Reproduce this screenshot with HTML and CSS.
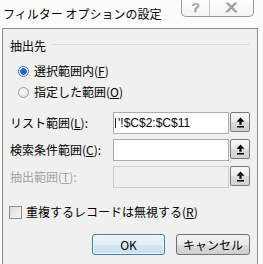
FILE: index.html
```html
<!DOCTYPE html>
<html lang="ja">
<head>
    <meta charset="UTF-8">
    <title>フィルター オプションの設定</title>
    <link rel="stylesheet" href="styles.css">
</head>
<body>
    <div class="ventana">
        <div class="barra-titulo">
            <span class="titulo">フィルター オプションの設定</span>
            <div class="botones-titulo">
                <span class="btn-ayuda">?</span>
                <span class="btn-cerrar">X</span>
            </div>
        </div>

        <div class="panel">
            <div class="grupo-cabecera">
                <span>抽出先</span>
                <span class="grupo-linea"></span>
            </div>

            <label class="opcion opcion-primera">
                <span class="radio radio-activo"></span>
                <span>選択範囲内(<u>F</u>)</span>
            </label>
            <label class="opcion">
                <span class="radio"></span>
                <span>指定した範囲(<u>O</u>)</span>
            </label>

            <div class="campo campo-primero">
                <span class="campo-etiqueta">リスト範囲(<u>L</u>):</span>
                <div class="campo-entrada"><span class="recorte"></span><span>'!$C$2:$C$11</span></div>
                <span class="btn-rango">
                    <svg width="9" height="11" viewBox="0 0 9 11"><path d="M4.5 0.5 L8.5 4.8 L5.6 4.8 L5.6 7.8 L3.4 7.8 L3.4 4.8 L0.5 4.8 Z" fill="#000"/><rect x="1" y="9" width="7" height="1.5" fill="#000"/></svg>
                </span>
            </div>
            <div class="campo">
                <span class="campo-etiqueta">検索条件範囲(<u>C</u>):</span>
                <div class="campo-entrada"></div>
                <span class="btn-rango">
                    <svg width="9" height="11" viewBox="0 0 9 11"><path d="M4.5 0.5 L8.5 4.8 L5.6 4.8 L5.6 7.8 L3.4 7.8 L3.4 4.8 L0.5 4.8 Z" fill="#000"/><rect x="1" y="9" width="7" height="1.5" fill="#000"/></svg>
                </span>
            </div>
            <div class="campo">
                <span class="campo-etiqueta desactivado">抽出範囲(<u>T</u>):</span>
                <div class="campo-entrada entrada-desactivada"></div>
                <span class="btn-rango">
                    <svg width="9" height="11" viewBox="0 0 9 11"><path d="M4.5 0.5 L8.5 4.8 L5.6 4.8 L5.6 7.8 L3.4 7.8 L3.4 4.8 L0.5 4.8 Z" fill="#000"/><rect x="1" y="9" width="7" height="1.5" fill="#000"/></svg>
                </span>
            </div>

            <label class="casilla-fila">
                <span class="casilla"></span>
                <span>重複するレコードは無視する(<u>R</u>)</span>
            </label>

            <div class="acciones">
                <button class="boton boton-ok">OK</button>
                <button class="boton">キャンセル</button>
            </div>
        </div>
    </div>
</body>
</html>
```

FILE: styles.css
```css
/* Diálogo de opciones de filtro */
body {
    margin: 0;
    background-color: #fcfcfc;
    font-family: "Noto Sans CJK JP", "Noto Sans", sans-serif;
    font-size: 12px;
    color: #000;
    overflow: hidden;
}

.ventana {
    width: 263px;
    height: 264px;
    display: flex;
    flex-direction: column;
}

.barra-titulo {
    height: 28px;
    display: flex;
    align-items: flex-start;
    flex-shrink: 0;
}

.titulo {
    padding-left: 3px;
    margin-top: 6px;
    line-height: 16px;
}

.botones-titulo {
    margin-left: auto;
    margin-right: 9px;
    margin-top: -1px;
    display: flex;
    height: 17px;
    border: 1px solid #9a9a9a;
    border-top: none;
    border-radius: 0 0 5px 5px;
    background: linear-gradient(#ffffff, #f3f3f3);
}

.botones-titulo span {
    display: flex;
    align-items: center;
    justify-content: center;
    font-family: "Liberation Sans", sans-serif;
    font-size: 13px;
    color: transparent;
    -webkit-text-stroke: 0.7px #8a8a8a;
}

.btn-ayuda {
    width: 27px;
    border-right: 1px solid #c4c4c4;
}

.btn-cerrar {
    width: 43px;
    transform: scaleX(1.3);
}

.panel {
    flex: 1;
    margin: 0 5px 0 2px;
    border: 1px solid #8c8c8c;
    border-bottom: none;
    background-color: #f0f0f0;
    padding-top: 9px;
}

.grupo-cabecera {
    display: flex;
    padding: 0 7px;
    line-height: 16px;
}

.grupo-linea {
    flex: 1;
    height: 1px;
    margin: 6px 0 0 6px;
    background-color: #d8dde2;
}

.opcion {
    display: flex;
    align-items: center;
    padding-left: 15px;
    line-height: 16px;
    margin-top: 5px;
}

.opcion-primera {
    margin-top: 9px;
}

.radio {
    width: 9px;
    height: 9px;
    border: 1px solid #9c9c9c;
    border-radius: 50%;
    background: radial-gradient(circle at 40% 35%, #ffffff, #dcdcdc);
    margin-right: 5px;
}

.radio-activo {
    border-color: #5b7fa6;
    background: radial-gradient(circle, #1e5fc8 0, #2d6fd0 3px, #cfe2f6 3.6px, #eef4fb 100%);
}

.campo {
    display: flex;
    align-items: center;
    padding-left: 7px;
    margin-top: 5px;
}

.campo-primero {
    margin-top: 12px;
}

.campo-etiqueta {
    width: 103px;
    line-height: 16px;
}

.desactivado {
    color: #a3a3a3;
}

.campo-entrada {
    width: 114px;
    height: 20px;
    border: 1px solid #a9acb2;
    background-color: #fff;
    display: flex;
    align-items: center;
    overflow: hidden;
    white-space: nowrap;
    font-family: "Liberation Sans", sans-serif;
    font-size: 12px;
}

/* resto del carácter desplazado fuera de la vista */
.recorte {
    width: 1px;
    height: 10px;
    margin: 0 2px 0 1px;
    background-color: #222;
}

.entrada-desactivada {
    background-color: #f0f0f0;
    border-color: #cdcdcd;
}

.btn-rango {
    width: 18px;
    height: 18px;
    margin-left: 1px;
    margin-top: -2px;
    border: 1px solid #7a7a7a;
    border-radius: 2px;
    background: linear-gradient(#f7f7f7, #ececec 50%, #dcdcdc 51%, #d2d2d2);
    display: flex;
    align-items: center;
    justify-content: center;
}

.casilla-fila {
    display: flex;
    align-items: center;
    padding-left: 6px;
    margin-top: 16px;
    line-height: 16px;
}

.casilla {
    width: 11px;
    height: 11px;
    border: 1px solid #8f8f8f;
    background: linear-gradient(135deg, #dcdcdc, #f8f8f8);
    margin-right: 4px;
}

.acciones {
    display: flex;
    justify-content: flex-end;
    gap: 11px;
    padding-right: 7px;
    margin-top: 14px;
}

.boton {
    width: 74px;
    height: 21px;
    padding: 0;
    border: 1px solid #707070;
    border-radius: 3px;
    background: linear-gradient(#f2f2f2, #ebebeb 50%, #dddddd 51%, #cfcfcf);
    font-family: "Noto Sans CJK JP", sans-serif;
    font-size: 12px;
    color: #000;
}

.boton-ok {
    width: 73px;
    border-color: #3c7fb1;
    background: linear-gradient(#eef5fa, #e3eef6 50%, #d5e6f2 51%, #c9dfee);
    box-shadow: inset 0 0 0 1px rgba(255, 255, 255, 0.7);
}
```
